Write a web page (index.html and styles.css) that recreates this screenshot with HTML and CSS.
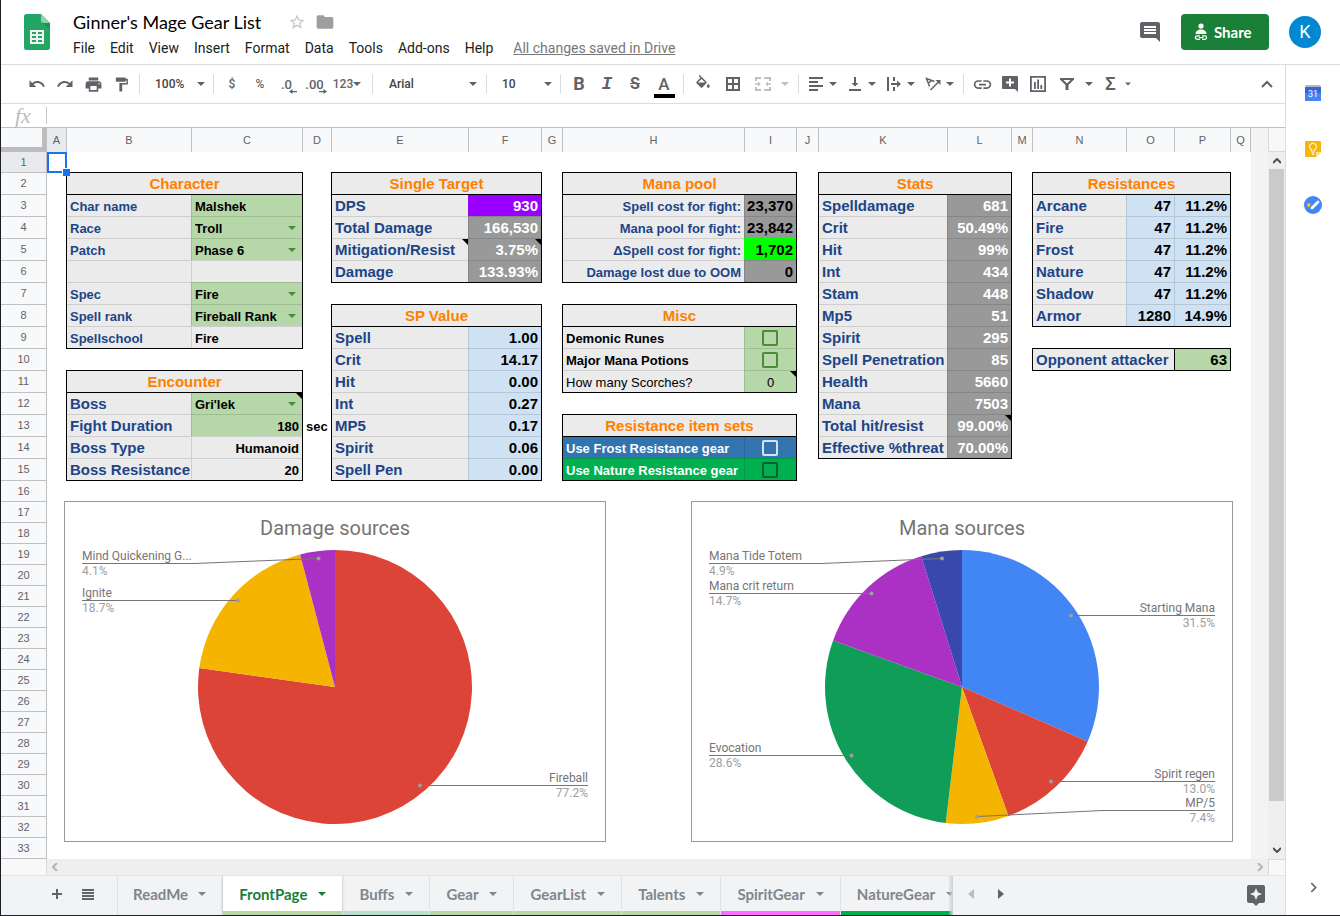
FILE: index.html
```html
<!DOCTYPE html>
<html lang="en">
<head>
<meta charset="utf-8">
<title>Ginner's Mage Gear List</title>
<link rel="stylesheet" href="styles.css">
</head>
<body>
<svg class="defs" aria-hidden="true">
  <symbol id="caret" viewBox="0 0 8 8"><path d="M0 2h8L4 6z"/></symbol>
</svg>

<div class="app">
  <header class="top">
    <svg class="logo" viewBox="0 0 26 36">
      <path fill="#23a566" d="M2.500 0H17l9 9v24.500a2.500 2.500 0 0 1-2.500 2.500h-21A2.500 2.500 0 0 1 0 33.500v-31A2.500 2.500 0 0 1 2.500 0z"/>
      <path fill="#8ed1b1" d="M17 0l9 9h-6.500A2.500 2.500 0 0 1 17 6.500z"/>
      <path fill="#1c9156" d="M18 8.500l8 7V9h-6.500z"/>
      <path fill="#f1f1f1" fill-rule="evenodd" d="M6 16h14v14H6zM8 18v2h4v-2zm6 0v2h4v-2zM8 22v2h4v-2zm6 0v2h4v-2zM8 26v2h4v-2zm6 0v2h4v-2z"/>
    </svg>
    <div class="heading">
      <div class="title-row">
        <h1>Ginner's Mage Gear List</h1>
        <button class="plain star" aria-label="Star"><svg viewBox="0 0 24 24" width="18" height="18"><path d="M22 9.240l-7.190-.62L12 2 9.190 8.630 2 9.240l5.460 4.730L5.820 21 12 17.270 18.180 21l-1.630-7.030L22 9.240zM12 15.400l-3.760 2.270 1-4.280-3.320-2.880 4.380-.38L12 6.100l1.710 4.040 4.380.38-3.320 2.880 1 4.280L12 15.400z"/></svg></button>
        <button class="plain folder" aria-label="Move"><svg viewBox="0 0 24 24" width="20" height="20"><path d="M10 4H4c-1.100 0-2 .9-2 2v12c0 1.100.9 2 2 2h16c1.100 0 2-.9 2-2V8c0-1.100-.9-2-2-2h-8l-2-2z"/></svg></button>
      </div>
      <nav class="menus">
        <button>File</button><button>Edit</button><button>View</button><button>Insert</button><button>Format</button><button>Data</button><button>Tools</button><button>Add-ons</button><button>Help</button>
        <a href="#">All changes saved in Drive</a>
      </nav>
    </div>
    <div class="actions">
      <button class="plain comments" aria-label="Comments"><svg viewBox="0 0 24 24" width="24" height="24"><path d="M22 4c0-1.100-.9-2-2-2H4c-1.100 0-2 .9-2 2v12c0 1.100.9 2 2 2h14l4 4V4zM18 14H6v-2h12v2zm0-3H6V9h12v2zm0-3H6V6h12v2z"/></svg></button>
      <button class="share"><svg viewBox="0 0 14 18" width="14" height="18"><circle cx="7" cy="3" r="2.600" fill="#fff"/><path fill="#fff" d="M1.500 11c0-3 2.500-4.500 5.500-4.500s5.500 1.500 5.500 4.500z"/><path fill="none" stroke="#fff" stroke-width="1.300" d="M6 12.800H3.200a1.800 1.800 0 0 0 0 3.600H6M8 12.800h2.800a1.800 1.800 0 0 1 0 3.600H8M4.500 14.600h5"/></svg>Share</button>
      <button class="avatar" aria-label="Account">K</button>
    </div>
  </header>

  <div class="middle">
    <main class="editor">
      <div class="toolbar">
        <button class="tb" aria-label="Undo"><svg viewBox="0 0 24 24" width="18" height="18"><path d="M12.500 8c-2.650 0-5.050.99-6.900 2.600L2 7v9h9l-3.620-3.620c1.390-1.160 3.160-1.880 5.120-1.880 3.540 0 6.550 2.310 7.600 5.500l2.370-.78C21.080 11.030 17.150 8 12.500 8z"/></svg></button>
        <button class="tb" aria-label="Redo"><svg viewBox="0 0 24 24" width="18" height="18"><path d="M18.400 10.600C16.550 8.990 14.150 8 11.500 8c-4.650 0-8.580 3.030-9.960 7.220L3.900 16c1.050-3.190 4.050-5.500 7.600-5.500 1.950 0 3.730.72 5.120 1.880L13 16h9V7l-3.600 3.600z"/></svg></button>
        <button class="tb" aria-label="Print"><svg viewBox="0 0 24 24" width="19" height="19"><path d="M19 8H5c-1.660 0-3 1.340-3 3v6h4v4h12v-4h4v-6c0-1.660-1.340-3-3-3zm-3 11H8v-5h8v5zm3-7c-.55 0-1-.45-1-1s.45-1 1-1 1 .45 1 1-.45 1-1 1zm-1-9H6v4h12V3z"/></svg></button>
        <button class="tb" aria-label="Paint format"><svg viewBox="0 0 24 24" width="17" height="17"><path d="M18 4V3c0-.55-.45-1-1-1H5c-.55 0-1 .45-1 1v4c0 .55.45 1 1 1h12c.55 0 1-.45 1-1V6h1v4H9v11c0 .55.45 1 1 1h2c.55 0 1-.45 1-1v-9h8V4h-3z"/></svg></button>
        <i class="sep"></i>
        <label class="pick zoom-pick"><select aria-label="Zoom"><option>100%</option></select><svg class="caret"><use href="#caret"/></svg></label>
        <i class="sep"></i>
        <button class="tb">$</button>
        <button class="tb">%</button>
        <button class="tb dec" aria-label="Decrease decimal places">.0<svg viewBox="0 0 8 5"><path d="M3.500 0v2H8v1.200H3.500v1.800L0 2.500z"/></svg></button>
        <button class="tb dec" aria-label="Increase decimal places">.00<svg viewBox="0 0 8 5"><path d="M4.500 0v2H0v1.200h4.500v1.800L8 2.500z"/></svg></button>
        <button class="tb formats">123<svg class="caret"><use href="#caret"/></svg></button>
        <i class="sep"></i>
        <label class="pick font-pick"><select aria-label="Font"><option>Arial</option></select><svg class="caret"><use href="#caret"/></svg></label>
        <i class="sep"></i>
        <label class="pick zoom-pick"><select aria-label="Font size"><option>10</option></select><svg class="caret"><use href="#caret"/></svg></label>
        <i class="sep"></i>
        <button class="tb letter">B</button>
        <button class="tb letter italic">I</button>
        <button class="tb letter strike">S</button>
        <button class="tb wide letter color"><span>A</span></button>
        <i class="sep"></i>
        <button class="tb wide" aria-label="Fill color"><svg viewBox="0 0 24 24" width="18" height="18"><path d="M16.560 8.940L7.620 0 6.210 1.410l2.380 2.380-5.150 5.150c-.59.59-.59 1.540 0 2.120l5.500 5.500c.29.29.68.44 1.060.44s.77-.15 1.060-.44l5.500-5.500c.59-.58.59-1.530 0-2.120zM5.210 10L10 5.210 14.790 10H5.210zM19 11.500s-2 2.170-2 3.500c0 1.100.9 2 2 2s2-.9 2-2c0-1.330-2-3.500-2-3.500z"/></svg></button>
        <button class="tb wide" aria-label="Borders"><svg viewBox="0 0 14 14" width="14" height="14"><path fill-rule="evenodd" d="M0 0h14v14H0zM2 2v4h4V2zm6 0v4h4V2zM2 8v4h4V8zm6 0v4h4V8z"/></svg></button>
        <button class="tb split big off" aria-label="Merge cells"><svg viewBox="0 0 16 14" width="16" height="14"><path d="M0 0h6v2H2v2H0zM9 0h7v4h-2V2H9zM0 10h2v2h4v2H0zM14 10h2v4H9v-2h5zM0 6.200h3V4.500L5.800 7 3 9.500V7.800H0zM16 6.200h-3V4.500L10.200 7 13 9.500V7.800h3z"/></svg><svg class="caret"><use href="#caret"/></svg></button>
        <i class="sep"></i>
        <button class="tb split" aria-label="Horizontal align"><svg viewBox="0 0 14 14" width="14" height="14"><path d="M0 0h14v2H0zM0 4h9v2H0zM0 8h14v2H0zM0 12h9v2H0z"/></svg><svg class="caret"><use href="#caret"/></svg></button>
        <button class="tb split" aria-label="Vertical align"><svg viewBox="0 0 12 14" width="12" height="14"><path d="M5 0h2v6h2.500L6 9.500 2.500 6H5zM0 12h12v2H0z"/></svg><svg class="caret"><use href="#caret"/></svg></button>
        <button class="tb split" aria-label="Text wrapping"><svg viewBox="0 0 14 14" width="14" height="14"><path d="M0 0h2v14H0zM6 0h2v4H6zM6 10h2v4H6zM4 6h6V3.500L14 7l-4 3.500V8H4z"/></svg><svg class="caret"><use href="#caret"/></svg></button>
        <button class="tb split" aria-label="Text rotation"><svg viewBox="0 0 16 14" width="16" height="14"><path fill="none" stroke="#5f6368" stroke-width="1.500" d="M4.500 9.500L1.500 1.500L9.500 4.500M3 6.500L6.500 3.500M5.500 13L14 4.500"/><path d="M10.500 3H15.500v5z"/></svg><svg class="caret"><use href="#caret"/></svg></button>
        <i class="sep"></i>
        <button class="tb" aria-label="Insert link"><svg viewBox="0 0 24 24" width="21" height="21"><path d="M3.900 12c0-1.710 1.390-3.100 3.100-3.100h4V7H7c-2.760 0-5 2.240-5 5s2.240 5 5 5h4v-1.900H7c-1.710 0-3.100-1.390-3.100-3.100zM8 13h8v-2H8v2zm9-6h-4v1.900h4c1.710 0 3.100 1.390 3.100 3.100s-1.390 3.100-3.100 3.100h-4V17h4c2.760 0 5-2.240 5-5s-2.240-5-5-5z"/></svg></button>
        <button class="tb" aria-label="Insert comment"><svg viewBox="0 0 16 16" width="16" height="16"><path fill-rule="evenodd" d="M1 0h14a1 1 0 0 1 1 1v15l-3-3H1a1 1 0 0 1-1-1V1a1 1 0 0 1 1-1zM7 2.500v3H4v2h3v3h2v-3h3v-2H9v-3z"/></svg></button>
        <button class="tb" aria-label="Insert chart"><svg viewBox="0 0 16 16" width="16" height="16"><path fill-rule="evenodd" d="M0 0h16v16H0zM1.800 1.800v12.400h12.400V1.800zM4 6h1.800v7H4zM7.200 3.500H9V13H7.200zM10.400 9h1.800v4h-1.800z"/></svg></button>
        <button class="tb split big" aria-label="Filter"><svg viewBox="0 0 14 12" width="14" height="12"><path fill-rule="evenodd" d="M0 0h14v1.500L8.500 7v5h-3V7L0 1.500zM3.500 2L7 5.500 10.500 2z"/></svg><svg class="caret"><use href="#caret"/></svg></button>
        <button class="tb split sigma">Σ<svg class="caret small"><use href="#caret"/></svg></button>
        <button class="tb collapse" aria-label="Hide menus"><svg viewBox="0 0 12 8" width="12" height="8"><path fill="none" stroke="#5f6368" stroke-width="2" d="M1 7l5-5 5 5"/></svg></button>
      </div>

      <div class="formula"><label for="fx">fx</label><input id="fx" type="text"></div>

      <div class="col-heads">
        <div class="corner"></div>
        <div class="letters"><span class="on">A</span><span>B</span><span>C</span><span>D</span><span>E</span><span>F</span><span>G</span><span>H</span><span>I</span><span>J</span><span>K</span><span>L</span><span>M</span><span>N</span><span>O</span><span>P</span><span>Q</span></div>
        <div class="outside"></div>
        <div class="corner-right"></div>
      </div>

      <div class="body">
        <div class="row-heads"><span class="on">1</span><span>2</span><span>3</span><span>4</span><span>5</span><span>6</span><span>7</span><span>8</span><span>9</span><span>10</span><span>11</span><span>12</span><span>13</span><span>14</span><span>15</span><span>16</span><span>17</span><span>18</span><span>19</span><span>20</span><span>21</span><span>22</span><span>23</span><span>24</span><span>25</span><span>26</span><span>27</span><span>28</span><span>29</span><span>30</span><span>31</span><span>32</span><span>33</span></div>

        <div class="sheet">
          <div class="cursor"></div>

          <section class="box character">
            <table>
              <colgroup><col><col class="w-c"></colgroup>
              <thead><tr><th colspan="2">Character</th></tr></thead>
              <tbody class="sm">
                <tr><td>Char name</td><td class="in">Malshek</td></tr>
                <tr><td>Race</td><td class="in drop"><select aria-label="Race"><option>Troll</option></select><svg class="caret"><use href="#caret"/></svg></td></tr>
                <tr><td>Patch</td><td class="in drop"><select aria-label="Patch"><option>Phase 6</option></select><svg class="caret"><use href="#caret"/></svg></td></tr>
                <tr><td></td><td></td></tr>
                <tr><td>Spec</td><td class="in drop"><select aria-label="Spec"><option>Fire</option></select><svg class="caret"><use href="#caret"/></svg></td></tr>
                <tr><td>Spell rank</td><td class="in drop"><select aria-label="Spell rank"><option>Fireball Rank</option></select><svg class="caret"><use href="#caret"/></svg></td></tr>
                <tr><td>Spellschool</td><td class="dark">Fire</td></tr>
              </tbody>
            </table>
          </section>

          <section class="box encounter">
            <table>
              <colgroup><col><col class="w-c"></colgroup>
              <thead><tr><th colspan="2">Encounter</th></tr></thead>
              <tbody>
                <tr><td>Boss</td><td class="in drop sm note"><select aria-label="Boss"><option>Gri'lek</option></select><svg class="caret"><use href="#caret"/></svg></td></tr>
                <tr><td>Fight Duration</td><td class="in num sm">180</td></tr>
                <tr><td>Boss Type</td><td class="dark num sm">Humanoid</td></tr>
                <tr><td>Boss Resistance</td><td class="dark num sm">20</td></tr>
              </tbody>
            </table>
          </section>
          <div class="seconds">sec</div>

          <section class="box single">
            <table>
              <colgroup><col><col class="w-f"></colgroup>
              <thead><tr><th colspan="2">Single Target</th></tr></thead>
              <tbody>
                <tr><td>DPS</td><td class="purple num">930</td></tr>
                <tr><td>Total Damage</td><td class="gray num">166,530</td></tr>
                <tr><td class="note">Mitigation/Resist</td><td class="gray num note">3.75%</td></tr>
                <tr><td>Damage</td><td class="gray num">133.93%</td></tr>
              </tbody>
            </table>
          </section>

          <section class="box spvalue">
            <table>
              <colgroup><col><col class="w-f"></colgroup>
              <thead><tr><th colspan="2">SP Value</th></tr></thead>
              <tbody>
                <tr><td>Spell</td><td class="sky num">1.00</td></tr>
                <tr><td>Crit</td><td class="sky num">14.17</td></tr>
                <tr><td>Hit</td><td class="sky num">0.00</td></tr>
                <tr><td>Int</td><td class="sky num">0.27</td></tr>
                <tr><td>MP5</td><td class="sky num">0.17</td></tr>
                <tr><td>Spirit</td><td class="sky num">0.06</td></tr>
                <tr><td>Spell Pen</td><td class="sky num">0.00</td></tr>
              </tbody>
            </table>
          </section>

          <section class="box manapool">
            <table>
              <colgroup><col><col class="w-i"></colgroup>
              <thead><tr><th colspan="2">Mana pool</th></tr></thead>
              <tbody>
                <tr><td class="num sm">Spell cost for fight:</td><td class="gray ink num">23,370</td></tr>
                <tr><td class="num sm">Mana pool for fight:</td><td class="gray ink num">23,842</td></tr>
                <tr><td class="num sm">ΔSpell cost for fight:</td><td class="lime num">1,702</td></tr>
                <tr><td class="num sm">Damage lost due to OOM</td><td class="gray ink num">0</td></tr>
              </tbody>
            </table>
          </section>

          <section class="box misc">
            <table>
              <colgroup><col><col class="w-i"></colgroup>
              <thead><tr><th colspan="2">Misc</th></tr></thead>
              <tbody class="sm">
                <tr><td class="dark"><label for="runes">Demonic Runes</label></td><td class="in tick"><input type="checkbox" id="runes"></td></tr>
                <tr><td class="dark"><label for="potions">Major Mana Potions</label></td><td class="in tick"><input type="checkbox" id="potions"></td></tr>
                <tr><td class="dark light-face">How many Scorches?</td><td class="in mid light-face note">0</td></tr>
              </tbody>
            </table>
          </section>

          <section class="box sets">
            <table>
              <colgroup><col><col class="w-i"></colgroup>
              <thead><tr><th colspan="2">Resistance item sets</th></tr></thead>
              <tbody class="sm">
                <tr class="frost"><td><label for="frost">Use Frost Resistance gear</label></td><td class="tick"><input type="checkbox" id="frost"></td></tr>
                <tr class="nature"><td><label for="nature">Use Nature Resistance gear</label></td><td class="tick"><input type="checkbox" id="nature"></td></tr>
              </tbody>
            </table>
          </section>

          <section class="box stats">
            <table>
              <colgroup><col><col class="w-l"></colgroup>
              <thead><tr><th colspan="2">Stats</th></tr></thead>
              <tbody>
                <tr><td>Spelldamage</td><td class="gray num">681</td></tr>
                <tr><td>Crit</td><td class="gray num">50.49%</td></tr>
                <tr><td>Hit</td><td class="gray num">99%</td></tr>
                <tr><td>Int</td><td class="gray num">434</td></tr>
                <tr><td>Stam</td><td class="gray num">448</td></tr>
                <tr><td>Mp5</td><td class="gray num">51</td></tr>
                <tr><td>Spirit</td><td class="gray num">295</td></tr>
                <tr><td>Spell Penetration</td><td class="gray num">85</td></tr>
                <tr><td>Health</td><td class="gray num">5660</td></tr>
                <tr><td>Mana</td><td class="gray num">7503</td></tr>
                <tr><td>Total hit/resist</td><td class="gray num note">99.00%</td></tr>
                <tr><td>Effective %threat</td><td class="gray num">70.00%</td></tr>
              </tbody>
            </table>
          </section>

          <section class="box resist">
            <table>
              <colgroup><col><col class="w-o"><col class="w-p"></colgroup>
              <thead><tr><th colspan="3">Resistances</th></tr></thead>
              <tbody>
                <tr><td>Arcane</td><td class="sky num">47</td><td class="sky num">11.2%</td></tr>
                <tr><td>Fire</td><td class="sky num">47</td><td class="sky num">11.2%</td></tr>
                <tr><td>Frost</td><td class="sky num">47</td><td class="sky num">11.2%</td></tr>
                <tr><td>Nature</td><td class="sky num">47</td><td class="sky num">11.2%</td></tr>
                <tr><td>Shadow</td><td class="sky num">47</td><td class="sky num">11.2%</td></tr>
                <tr><td>Armor</td><td class="sky num">1280</td><td class="sky num">14.9%</td></tr>
              </tbody>
            </table>
          </section>

          <section class="box opponent">
            <table>
              <colgroup><col><col class="w-p"></colgroup>
              <tbody><tr><td>Opponent attacker</td><td class="in num">63</td></tr></tbody>
            </table>
          </section>

          <figure class="chart damage">
            <svg viewBox="0 0 540 339">
              <g transform="translate(-1 -1)">
                <path fill="#db4437" d="M271 186V49A137 137 0 1 1 135.300 167.100z"/>
                <path fill="#f4b400" d="M271 186L135.300 167.100A137 137 0 0 1 236.100 53.500z"/>
                <path fill="#ab30c4" d="M271 186L236.100 53.500A137 137 0 0 1 271 49z"/>
                <g class="leads">
                  <path d="M18 62.500h112L254.500 57.500M18 99.500h156M356 284.500h168"/>
                  <circle cx="254.500" cy="57.500" r="2"/><circle cx="174" cy="99.500" r="2"/><circle cx="356" cy="284.500" r="2"/>
                </g>
                <text class="ct" x="271" y="34">Damage sources</text>
                <text x="18" y="59">Mind Quickening G...</text><text class="pct" x="18" y="74">4.1%</text>
                <text x="18" y="96">Ignite</text><text class="pct" x="18" y="111">18.7%</text>
                <text class="end" x="524" y="281">Fireball</text><text class="pct end" x="524" y="296">77.2%</text>
              </g>
            </svg>
          </figure>

          <figure class="chart mana">
            <svg viewBox="0 0 540 339">
              <g transform="translate(-1 -1)">
                <path fill="#4285f4" d="M271 186V49A137 137 0 0 1 396.700 240.400z"/>
                <path fill="#db4437" d="M271 186L396.700 240.400A137 137 0 0 1 317.400 314.900z"/>
                <path fill="#f4b400" d="M271 186L317.400 314.900A137 137 0 0 1 254.700 322z"/>
                <path fill="#0f9d58" d="M271 186L254.700 322A137 137 0 0 1 142.100 139.600z"/>
                <path fill="#ab30c4" d="M271 186L142.100 139.600A137 137 0 0 1 230.300 55.200z"/>
                <path fill="#3949ab" d="M271 186L230.300 55.200A137 137 0 0 1 271 49z"/>
                <g class="leads">
                  <path d="M18 62.500h112L251 57.500M18 92.500h162M18 254.500h142M380 114.500h144M360 280.500h164M286 315.500L412 309.500h112"/>
                  <circle cx="251" cy="57.500" r="2"/><circle cx="180.500" cy="92.500" r="2"/><circle cx="160.500" cy="254.500" r="2"/><circle cx="380" cy="114.500" r="2"/><circle cx="360" cy="280.500" r="2"/><circle cx="286" cy="315.500" r="2"/>
                </g>
                <text class="ct" x="271" y="34">Mana sources</text>
                <text x="18" y="59">Mana Tide Totem</text><text class="pct" x="18" y="74">4.9%</text>
                <text x="18" y="89">Mana crit return</text><text class="pct" x="18" y="104">14.7%</text>
                <text x="18" y="251">Evocation</text><text class="pct" x="18" y="266">28.6%</text>
                <text class="end" x="524" y="111">Starting Mana</text><text class="pct end" x="524" y="126">31.5%</text>
                <text class="end" x="524" y="277">Spirit regen</text><text class="pct end" x="524" y="292">13.0%</text>
                <text class="end" x="524" y="306">MP/5</text><text class="pct end" x="524" y="321">7.4%</text>
              </g>
            </svg>
          </figure>
        </div>

        <div class="outside"></div>
        <div class="vscroll">
          <svg viewBox="0 0 8 6"><path d="M0 5l4-4 4 4"/></svg>
          <div class="thumb"></div>
          <svg viewBox="0 0 8 6"><path d="M0 1l4 4 4-4"/></svg>
        </div>
      </div>

      <div class="hscroll">
        <div class="stub"></div>
        <div class="track"><svg viewBox="0 0 6 8"><path d="M5 0L1 4l4 4"/></svg><svg viewBox="0 0 6 8"><path d="M1 0l4 4-4 4"/></svg></div>
        <div class="stub-right"></div>
      </div>

      <footer class="tabs">
        <button class="plain add" aria-label="Add sheet"><svg viewBox="0 0 10 10" width="10" height="10"><path d="M4 0h2v4h4v2H6v4H4V6H0V4h4z"/></svg></button>
        <button class="plain all" aria-label="All sheets"><svg viewBox="0 0 12 11" width="12" height="11"><path d="M0 0h12v2H0zM0 3h12v2H0zM0 6h12v2H0zM0 9h12v2H0z"/></svg></button>
        <div class="strip">
          <button class="tab">ReadMe<svg class="caret"><use href="#caret"/></svg></button>
          <button class="tab active c-green">FrontPage<svg class="caret"><use href="#caret"/></svg></button>
          <button class="tab c-mint">Buffs<svg class="caret"><use href="#caret"/></svg></button>
          <button class="tab c-green">Gear<svg class="caret"><use href="#caret"/></svg></button>
          <button class="tab c-green">GearList<svg class="caret"><use href="#caret"/></svg></button>
          <button class="tab c-green">Talents<svg class="caret"><use href="#caret"/></svg></button>
          <button class="tab c-pink">SpiritGear<svg class="caret"><use href="#caret"/></svg></button>
          <button class="tab c-deep">NatureGear<svg class="caret"><use href="#caret"/></svg></button>
        </div>
        <button class="plain nav dim" aria-label="Previous sheets"><svg viewBox="0 0 6 10" width="6" height="10"><path d="M6 0v10L0 5z"/></svg></button>
        <button class="plain nav" aria-label="Next sheets"><svg viewBox="0 0 6 10" width="6" height="10"><path d="M0 0v10l6-5z"/></svg></button>
        <button class="plain explore" aria-label="Explore"><svg viewBox="0 0 18 21" width="18" height="21"><path fill-rule="evenodd" d="M2 0h14a2 2 0 0 1 2 2v14a2 2 0 0 1-2 2h-4l-3 3-3-3H2a2 2 0 0 1-2-2V2a2 2 0 0 1 2-2zM9 3L7.300 7.300 3 9l4.300 1.700L9 15l1.700-4.300L15 9l-4.300-1.700z"/></svg></button>
      </footer>
    </main>

    <aside class="side">
      <button class="plain" aria-label="Calendar"><svg viewBox="0 0 18 18" width="18" height="18"><path fill="#b9b9bd" d="M1.500 1h15v3h-15z"/><path fill="#3367d6" d="M1 3h16v7H1z"/><path fill="#4285f4" d="M1 9h16v8H1z"/><text x="9" y="13" class="cal">31</text></svg></button>
      <button class="plain" aria-label="Keep"><svg viewBox="0 0 18 18" width="18" height="18"><path fill="#f5b50a" d="M2 1h14a1 1 0 0 1 1 1v10l-5 5H2a1 1 0 0 1-1-1V2a1 1 0 0 1 1-1z"/><path fill="#fde08a" d="M12 17v-5h5z"/><path fill="none" stroke="#fff4d0" stroke-width="1.200" d="M7.500 11V9.700a3.400 3.400 0 1 1 3 0V11zM7.500 12.800h3M8 14.300h2"/></svg></button>
      <button class="plain" aria-label="Tasks"><svg viewBox="0 0 18 18" width="18" height="18"><circle cx="9" cy="9" r="9" fill="#4285f4"/><path stroke="#fff" stroke-width="2.800" stroke-linecap="round" d="M8 12l6-6"/><circle cx="4.800" cy="9" r="1.900" fill="#fbbc04"/></svg></button>
      <button class="plain hide" aria-label="Hide side panel"><svg viewBox="0 0 8 12" width="7" height="11"><path fill="none" stroke="#5f6368" stroke-width="1.800" d="M1.500 1l5 5-5 5"/></svg></button>
    </aside>
  </div>
</div>
</body>
</html>
```

FILE: styles.css
```css
* { box-sizing: border-box; }
body { margin: 0; background: #fff; font-family: Roboto, "Liberation Sans", sans-serif; color: #000; }
button, select, input { font: inherit; color: inherit; margin: 0; padding: 0; border: 0; background: none; border-radius: 0; }
svg { display: block; fill: currentColor; }
.defs { position: absolute; width: 0; height: 0; }
.plain { display: flex; align-items: center; justify-content: center; color: #5f6368; }
.caret { width: 8px; height: 8px; flex: none; }

.app { display: flex; flex-direction: column; min-height: 100vh; border-left: 1px solid #1d1d26; border-bottom: 1px solid #1d1d26; overflow: hidden; }

/* Title bar */
.top { display: flex; align-items: flex-start; height: 65px; padding-left: 23px; border-bottom: 1px solid #dadce0; }
.logo { width: 26px; height: 36px; margin-top: 14px; flex: none; }
.heading { flex: 1; padding: 10px 0 0 23px; }
.title-row { display: flex; align-items: center; height: 24px; }
h1 { margin: 0; font: 400 18px/24px Lato, sans-serif; }
.star { width: 20px; margin-left: 26px; color: #c4c4c4; }
.folder { width: 20px; margin-left: 8px; color: #9e9e9e; }
.menus { display: flex; gap: 15px; font-size: 14px; line-height: 20px; padding-top: 4px; color: #202124; }
.menus a { margin-left: 5px; color: #777; }
.actions { display: flex; align-items: center; padding: 14px 19px 0 0; }
.share { display: flex; align-items: center; gap: 6px; width: 88px; height: 36px; padding-left: 13px; margin: 0 20px 0 19px; border-radius: 4px; background: #1a8038; color: #fff; font: 700 15px/18px Lato, sans-serif; }
.avatar { width: 32px; height: 32px; border-radius: 50%; background: #0288d1; color: #fff; font: 400 18px/32px Roboto, sans-serif; }

.middle { flex: 1; display: flex; }
.editor { flex: 1; min-width: 0; display: flex; flex-direction: column; }
.side { display: flex; flex-direction: column; align-items: center; gap: 38px; width: 55px; padding: 19px 0 22px; border-left: 1px solid #dadce0; }
.side .hide { margin-top: auto; }
.cal { font: 400 9px Roboto, sans-serif; fill: #fff; text-anchor: middle; }

/* Toolbar */
.toolbar { display: flex; align-items: center; height: 39px; padding-left: 22px; border-bottom: 1px solid #dadce0; color: #5f6368; font-weight: 500; font-size: 12px; }
.tb { display: flex; align-items: center; justify-content: center; position: relative; flex: none; width: 28px; height: 28px; }
.sep { flex: none; width: 1px; height: 20px; margin: 0 4px; background: #dadce0; }
.tb.wide { width: 30px; }
.pick { display: flex; align-items: center; flex: none; padding: 0 4px 0 11px; color: #5f6368; }
.pick select { flex: 1; min-width: 0; appearance: none; color: #444; }
.zoom-pick { width: 65px; }
.font-pick { width: 105px; padding: 0 5px 0 12px; }
.dec { font-size: 13px; padding-right: 3px; }
.dec svg { position: absolute; right: 5px; bottom: 4px; width: 8px; height: 5px; }
.dec + .dec svg { right: 3px; }
.tb.formats { width: 38px; padding-right: 4px; }
.letter { font-size: 18px; font-weight: 700; line-height: 20px; }
.italic { font-family: "Liberation Mono", monospace; font-style: italic; }
.strike { font-size: 16px; text-decoration: line-through; }
.color { font-size: 17px; font-weight: 500; align-items: flex-end; }
.color span { width: 21px; height: 24px; border-bottom: 4px solid #000; }
.split { width: 39px; justify-content: flex-start; }
.split > :first-child { width: 26px; }
.split .caret { width: 8px; }
.split.big { width: 47px; }
.split.big > :first-child { width: 30px; }
.split.big .caret { margin-left: 3px; }
.off { color: #c0c0c0; }
.split.big.off { width: 46px; }
.sigma { font: 700 18px/20px "Liberation Sans", sans-serif; padding-left: 6px; gap: 9px; }
.split .caret.small { width: 6px; }
.collapse { margin: 0 4px 0 auto; }

/* Formula bar */
.formula { display: flex; align-items: center; height: 24px; border-bottom: 1px solid #c0c0c0; }
.formula label { width: 46px; padding-left: 14px; font: italic 22px/20px "Liberation Serif", serif; color: #bdbdbd; }
.formula input { flex: 1; height: 17px; border-left: 1px solid #c6c6c6; outline: 0; margin-left: -1px; padding-left: 6px; }

/* Headings */
.col-heads, .row-heads { font: 11px "Liberation Sans", Arial, sans-serif; color: #5f6368; }
.col-heads { display: flex; height: 24px; }
.corner { flex: none; width: 46px; background: #f8f9fa; border: solid #bdbdbd; border-width: 0 5px 5px 0; }
.letters, .sheet { flex: none; display: grid; grid-template-columns: 20px 125px 111px 29px 137px 73px 21px 182px 52px 22px 129px 64px 21px 94px 48px 56px 20px; }
.letters span { border: solid #c0c0c0; border-width: 0 1px 1px 0; background: #f8f9fa; line-height: 24px; text-align: center; }
.letters .on, .row-heads .on { background: #e8eaed; }
.outside { flex: 1; background: #f3f3f3; }
.corner-right { flex: none; width: 17px; background: #f8f8f8; border: solid #d9d9d9; border-width: 0 0 1px 1px; }
.body { display: flex; }
.row-heads, .sheet { grid-template-rows: 21px repeat(14, 22px) repeat(18, 21px); }
.row-heads { flex: none; display: grid; width: 46px; text-align: center; background: #f8f9fa; }
.row-heads span { border: solid #c0c0c0; border-width: 0 1px 1px 0; line-height: 20px; }

/* Sheet */
.sheet { position: relative; background: #fff; font: 700 15px/21px "Liberation Sans", Arial, sans-serif; }
.cursor { position: relative; grid-area: 1 / 1; border: 2px solid #1a73e8; z-index: 1; }
.cursor::after { content: ""; position: absolute; right: -5px; bottom: -5px; width: 7px; height: 7px; background: #1a73e8; border: solid #fff; border-width: 1px 0 0 1px; }
.box { margin: -1px 0 0 -1px; }
.character { grid-area: 2 / 2 / 10 / 4; }
.encounter { grid-area: 11 / 2 / 16 / 4; }
.seconds { grid-area: 13 / 4; padding: 2px 0 0 3px; font-size: 13px; line-height: 19px; }
.single { grid-area: 2 / 5 / 7 / 7; }
.spvalue { grid-area: 8 / 5 / 16 / 7; }
.manapool { grid-area: 2 / 8 / 7 / 10; }
.misc { grid-area: 8 / 8 / 12 / 10; }
.sets { grid-area: 13 / 8 / 16 / 10; }
.stats { grid-area: 2 / 11 / 15 / 13; }
.resist { grid-area: 2 / 14 / 9 / 17; }
.opponent { grid-area: 10 / 14 / 11 / 17; }

table { width: 100%; table-layout: fixed; border-collapse: separate; border-spacing: 0; border: 1px solid #000; background: #ebebeb; color: #1c4587; }
.w-c { width: 111px; }
.w-f { width: 73px; }
.w-i { width: 52px; }
.w-l { width: 64px; }
.w-o { width: 48px; }
.w-p { width: 56px; }
th { height: 22px; padding: 0; border-bottom: 1px solid #000; color: #ff8000; }
td { position: relative; height: 22px; padding: 0 3px; border: solid rgba(0, 0, 0, .12); border-width: 1px 0 0; white-space: nowrap; }
td + td { border-left-width: 1px; color: #000; }
tbody tr:first-child td { height: 21px; border-top-width: 0; }
.sm td, td.sm { padding-top: 2px; font-size: 13px; line-height: 19px; }
.num { text-align: right; padding-left: 0; }
.mid { text-align: center; }
td.dark { color: #000; }
.in { background: #b6d7a8; }
.sky { background: #cfe2f3; }
td.gray { background: #999; color: #fff; }
td.gray.ink { color: #000; }
td.purple { background: #9900ff; color: #fff; border-color: transparent; }
td.lime { background: #00ff00; border-color: transparent; }
.light-face { font-weight: 400; }
.frost td { background: #3174b0; color: #fff; }
.nature td { background: #00b050; color: #fff; }
.frost td + td, .nature td + td { color: #fff; }
.opponent td + td { border-left: 1px solid #000; }
.note::after { content: ""; position: absolute; top: 0; right: 0; width: 6px; height: 6px; background: #000; clip-path: polygon(0 0, 100% 0, 100% 100%); }
.drop select { display: block; width: 100%; height: 19px; appearance: none; }
.drop .caret { position: absolute; right: 6px; top: 7px; color: #4b8a36; pointer-events: none; }
.sm .tick { padding: 0; }
.tick input { display: block; width: 16px; height: 16px; margin: 0 auto; appearance: none; border: 2px solid #4f8a3c; border-radius: 2px; }
.frost input { border-color: #d5e3ef; }
.nature input { border-color: #0a5f2e; }

.chart { position: absolute; top: 349px; width: 542px; margin: 0; border: 1px solid #9a9a9a; background: #fff; }
.damage { left: 17px; }
.mana { left: 644px; }
.chart text { font: 400 12px Roboto, sans-serif; fill: #757575; }
.chart .pct { fill: #9e9e9e; }
.chart .end { text-anchor: end; }
.chart .ct { font-size: 20px; text-anchor: middle; }
.leads path { fill: none; stroke: #757575; }
.leads circle { fill: #9e9e9e; }

/* Scroll bars */
.vscroll { flex: none; display: flex; flex-direction: column; align-items: center; width: 17px; padding: 6px 1px; background: #efefef; }
.vscroll svg, .track svg { width: 8px; height: 6px; flex: none; fill: none; stroke: #505050; stroke-width: 2; }
.thumb { width: 100%; height: 632px; margin: 5px 0 auto; background: #cacaca; }
.hscroll { display: flex; height: 17px; border-bottom: 1px solid #e3e5e8; }
.stub { width: 46px; background: #f8f8f8; border-right: 1px solid #d9d9d9; }
.track { flex: 1; display: flex; align-items: center; justify-content: space-between; padding: 0 5px; background: #efefef; }
.track svg { width: 6px; height: 8px; stroke: #b5b5b5; }
.stub-right { width: 17px; background: #f8f8f8; border: solid #d9d9d9; border-width: 1px 0 0 1px; }

/* Sheet tabs */
.tabs { flex: 1; display: flex; min-height: 39px; padding-left: 40px; background: #f1f3f4; }
.tabs .plain { padding-bottom: 3px; }
.add, .all { width: 31px; }
.strip { position: relative; display: flex; flex: 0 1 836px; min-width: 0; margin-left: 14px; overflow: hidden; border-left: 1px solid #e0e2e5; }
.strip::after { content: ""; position: absolute; top: 0; right: 0; bottom: 0; width: 4px; background: linear-gradient(to right, rgba(200, 202, 204, .3), #cfd1d3); }
.tab { display: flex; align-items: center; gap: 10px; flex: none; padding: 0 16px 0 15px; border: solid transparent; border-width: 1px 0 4px; box-shadow: 1px 0 #e0e2e5; margin-right: 1px; color: #80868b; font: 700 15px/18px Lato, sans-serif; }
.tab.active { background: #fff; color: #188038; border-top-color: #fff; box-shadow: 0 0 3px #b4b6b8; }
.c-green, .tab.active.c-green { border-bottom-color: #b6d7a8; }
.c-mint { border-bottom-color: #b7e1cd; }
.c-pink { border-bottom-color: #ff6dff; }
.c-deep { border-bottom-color: #00b050; }
.tab + .tab { padding-left: 16px; gap: 11px; }
.nav { width: 30px; margin-left: 3px; }
.nav + .nav { margin-left: 0; }
.dim { color: #bdbdbd; }
.tabs .explore { margin: 0 20px 0 auto; padding: 0; color: #5f6368; }
```
